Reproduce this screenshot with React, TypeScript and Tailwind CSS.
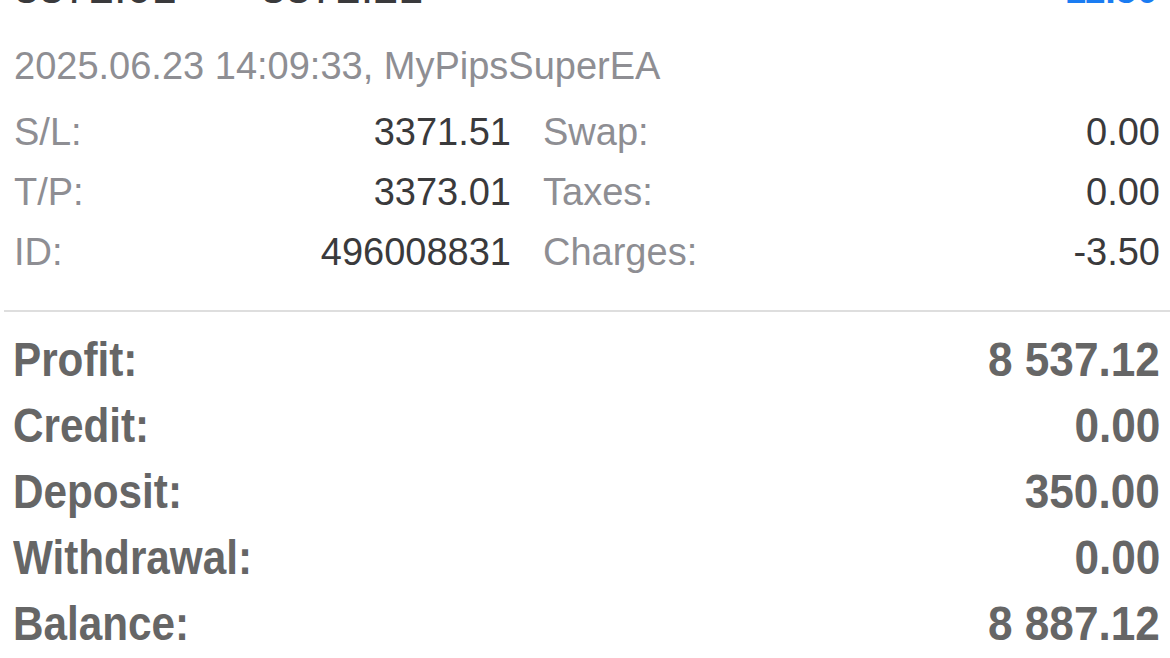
import React from "react";

type Pair = { label: string; value: string };

const detailRows: { left: Pair; right: Pair }[] = [
  { left: { label: "S/L:", value: "3371.51" }, right: { label: "Swap:", value: "0.00" } },
  { left: { label: "T/P:", value: "3373.01" }, right: { label: "Taxes:", value: "0.00" } },
  { left: { label: "ID:", value: "496008831" }, right: { label: "Charges:", value: "-3.50" } },
];

const totals: Pair[] = [
  { label: "Profit:", value: "8 537.12" },
  { label: "Credit:", value: "0.00" },
  { label: "Deposit:", value: "350.00" },
  { label: "Withdrawal:", value: "0.00" },
  { label: "Balance:", value: "8 887.12" },
];

const font = { fontFamily: '"Liberation Sans", Arial, sans-serif' };

export default function App() {
  return (
    <div
      className="flex flex-col w-[1170px] h-[658px] overflow-hidden bg-white"
      style={font}
    >
      {/* price row, cut off by the top edge */}
      <div className="flex items-baseline justify-between -mt-[42px] h-[60px] leading-[60px] pl-[14px] pr-[12px]">
        <div className="flex items-baseline gap-[84px] text-[45px] text-[#3a3a3c]">
          <span>3372.01</span>
          <span>3372.21</span>
        </div>
        <span className="text-[38px] font-bold text-[#1a7cf2]">11.50</span>
      </div>

      <div className="mt-[18px] h-[60px] leading-[60px] pl-[14px] text-[38px] text-[#8e8e93] whitespace-nowrap">
        2025.06.23 14:09:33, MyPipsSuperEA
      </div>

      <div className="flex flex-col mt-[6px] pl-[14px] pr-[10px]">
        {detailRows.map((row) => (
          <div key={row.left.label} className="flex h-[60px] leading-[60px] text-[38px]">
            <div className="flex justify-between w-[497px]">
              <span className="text-[#8e8e93]">{row.left.label}</span>
              <span className="text-[#3a3a3c]">{row.left.value}</span>
            </div>
            <div className="flex justify-between flex-1 ml-[32px]">
              <span className="text-[#8e8e93]">{row.right.label}</span>
              <span className="text-[#3a3a3c]">{row.right.value}</span>
            </div>
          </div>
        ))}
      </div>

      <div className="mt-[28px] ml-[4px] h-[2px] bg-[#dedede]" />

      <div className="flex flex-col mt-[15px] pl-[13px] pr-[10px]">
        {totals.map((t) => (
          <div
            key={t.label}
            className="flex justify-between h-[66px] leading-[66px] text-[48px] font-bold text-[#666666]"
          >
            <span className="origin-left scale-x-[0.88] whitespace-nowrap">{t.label}</span>
            <span className="origin-right scale-x-[0.92] whitespace-nowrap">{t.value}</span>
          </div>
        ))}
      </div>
    </div>
  );
}
